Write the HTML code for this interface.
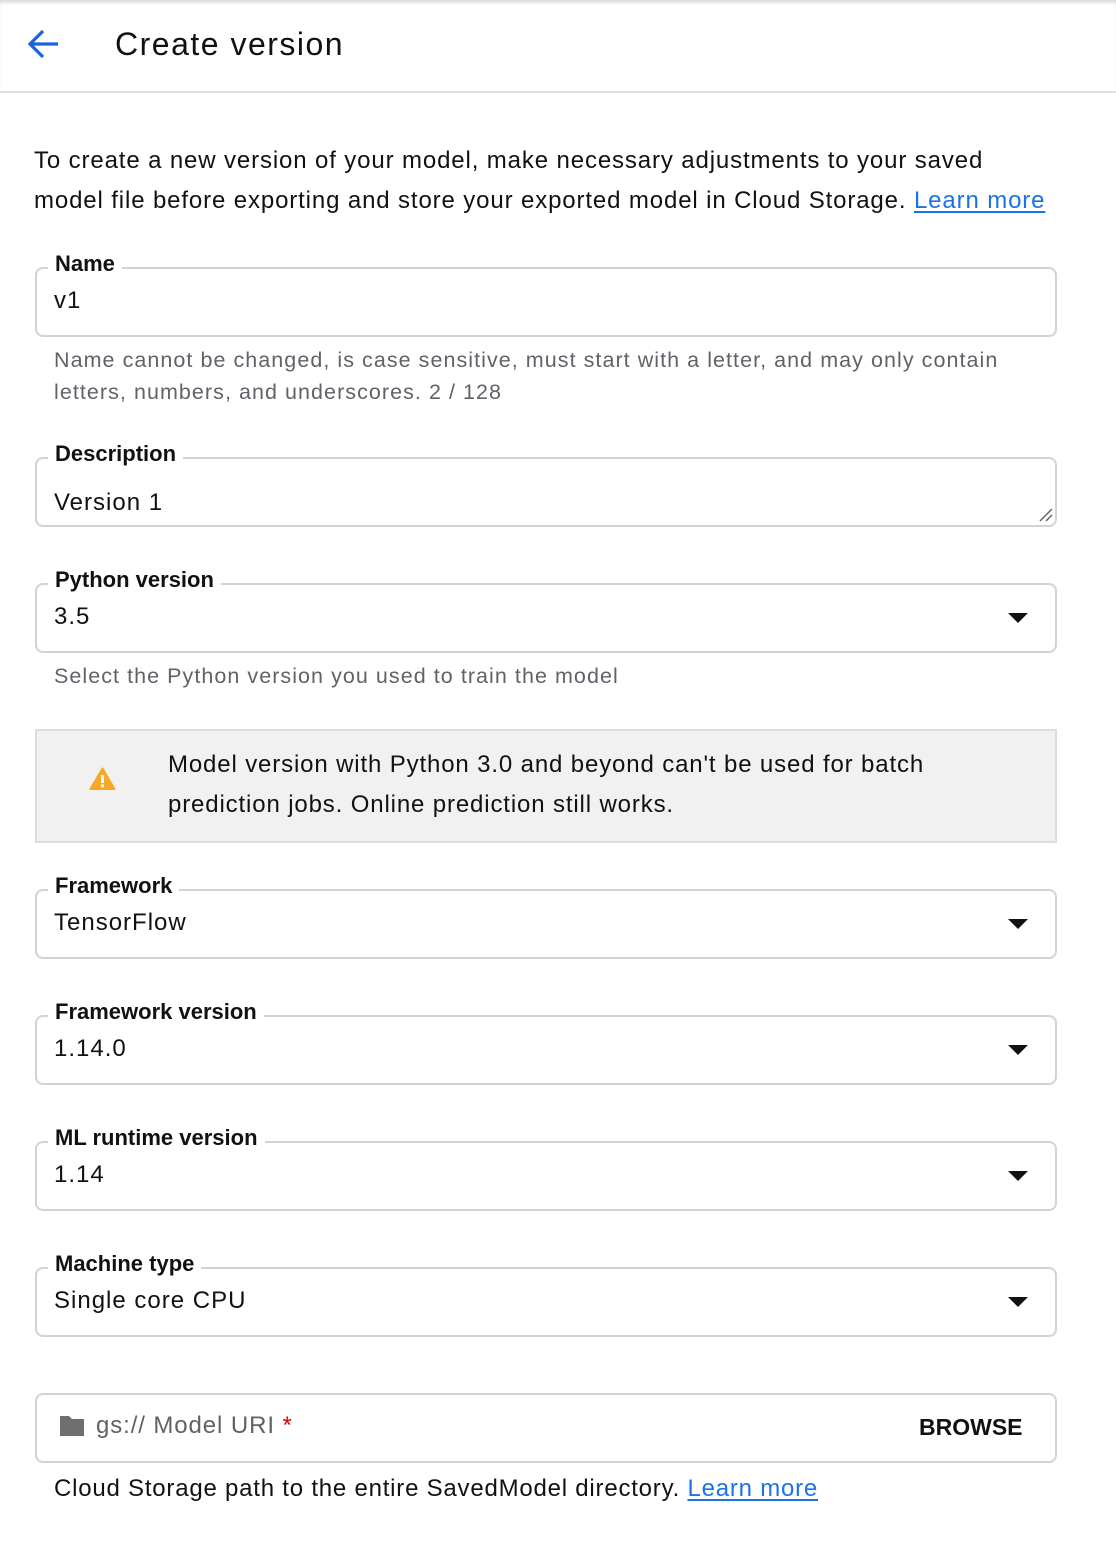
<!DOCTYPE html>
<html><head><meta charset="utf-8"><style>
*{margin:0;padding:0;box-sizing:border-box}
body{width:1116px;height:1546px;background:#fff;font-family:"Liberation Sans",Arial,sans-serif;color:#202124;position:relative;overflow:hidden}
.a{position:absolute;white-space:nowrap}
.hdr{position:absolute;left:0;top:0;width:1116px;height:93px;border-bottom:2px solid #e0e0e0;box-shadow:inset 0 4px 4px -2px rgba(0,0,0,.18)}
.box{position:absolute;left:35px;width:1022px;height:70px;border:2px solid #d3d3d3;border-radius:8px;background:#fff}
.lbl{position:absolute;left:48px;height:28px;line-height:28px;padding:0 7px;background:#fff;font-size:22px;font-weight:bold;color:#111}
.val{position:absolute;left:54px;font-size:24px;line-height:30px;color:#111;letter-spacing:1px}
.hint{position:absolute;left:54px;font-size:21.5px;line-height:32px;color:#5f6368;letter-spacing:1.05px}
.arr{position:absolute;left:1008px;width:0;height:0;border-left:10px solid transparent;border-right:10px solid transparent;border-top:10px solid #111}
a{color:#1a73e8;text-decoration:underline;text-underline-offset:3px}
</style></head><body>
<div class="hdr"></div>
<svg class="a" style="left:26px;top:28px" width="34" height="32" viewBox="0 0 34 32"><path d="M32 16H4M17 3L4 16l13 13" fill="none" stroke="#1a66d8" stroke-width="3.2"/></svg>
<div class="a" style="left:115px;top:24px;font-size:32px;line-height:40px;color:#111;letter-spacing:1.5px">Create version</div>

<div class="a" style="left:34px;top:141px;font-size:24px;line-height:40px;color:#111;letter-spacing:0.87px">To create a new version of your model, make necessary adjustments to your saved<br>model file before exporting and store your exported model in Cloud Storage. <a>Learn more</a></div>

<div class="box" style="top:267px"></div><div class="lbl" style="top:250px">Name</div><div class="val" style="top:286px">v1</div>
<div class="hint" style="top:344px">Name cannot be changed, is case sensitive, must start with a letter, and may only contain<br>letters, numbers, and underscores. 2 / 128</div>

<div class="box" style="top:457px"></div><div class="lbl" style="top:440px">Description</div><div class="val" style="top:488px">Version 1</div>
<svg class="a" style="left:1038px;top:507px" width="16" height="16"><path d="M2 14L14 2M8 14L14 8" stroke="#666" stroke-width="1.5"/></svg>

<div class="box" style="top:583px"></div><div class="lbl" style="top:566px">Python version</div><div class="val" style="top:602px">3.5</div><div class="arr" style="top:613px"></div>
<div class="hint" style="top:660px">Select the Python version you used to train the model</div>

<div class="a" style="left:35px;top:729px;width:1022px;height:114px;background:#f1f1f1;border:2px solid #dcdcdc"></div>
<svg class="a" style="left:89px;top:767px" width="27" height="24" viewBox="0 0 27 24"><path d="M13.5 1.5L1.5 22h24z" fill="#f9a825" stroke="#f9a825" stroke-width="2" stroke-linejoin="round"/><rect x="12" y="8" width="3" height="8" fill="#fff"/><rect x="12" y="17.5" width="3" height="3" fill="#fff"/></svg>
<div class="a" style="left:168px;top:745px;font-size:24px;line-height:40px;color:#111;letter-spacing:0.86px">Model version with Python 3.0 and beyond can't be used for batch<br>prediction jobs. Online prediction still works.</div>

<div class="box" style="top:889px"></div><div class="lbl" style="top:872px">Framework</div><div class="val" style="top:908px">TensorFlow</div><div class="arr" style="top:919px"></div>
<div class="box" style="top:1015px"></div><div class="lbl" style="top:998px">Framework version</div><div class="val" style="top:1034px">1.14.0</div><div class="arr" style="top:1045px"></div>
<div class="box" style="top:1141px"></div><div class="lbl" style="top:1124px">ML runtime version</div><div class="val" style="top:1160px">1.14</div><div class="arr" style="top:1171px"></div>
<div class="box" style="top:1267px"></div><div class="lbl" style="top:1250px">Machine type</div><div class="val" style="top:1286px">Single core CPU</div><div class="arr" style="top:1297px"></div>

<div class="box" style="top:1393px"></div>
<svg class="a" style="left:58px;top:1414px" width="28" height="24" viewBox="0 0 28 24"><path d="M2 2h9l3 3h12v17H2z" fill="#6f6f6f"/></svg>
<div class="a" style="left:96px;top:1411px;font-size:24px;line-height:30px;color:#5f6368;letter-spacing:0.9px">gs:// Model URI <span style="color:#d50000">*</span></div>
<div class="a" style="left:919px;top:1412px;font-size:23px;line-height:30px;font-weight:bold;color:#111">BROWSE</div>
<div class="a" style="left:54px;top:1473px;font-size:24px;line-height:32px;color:#111;letter-spacing:0.78px">Cloud Storage path to the entire SavedModel directory. <a>Learn more</a></div>
</body></html>
